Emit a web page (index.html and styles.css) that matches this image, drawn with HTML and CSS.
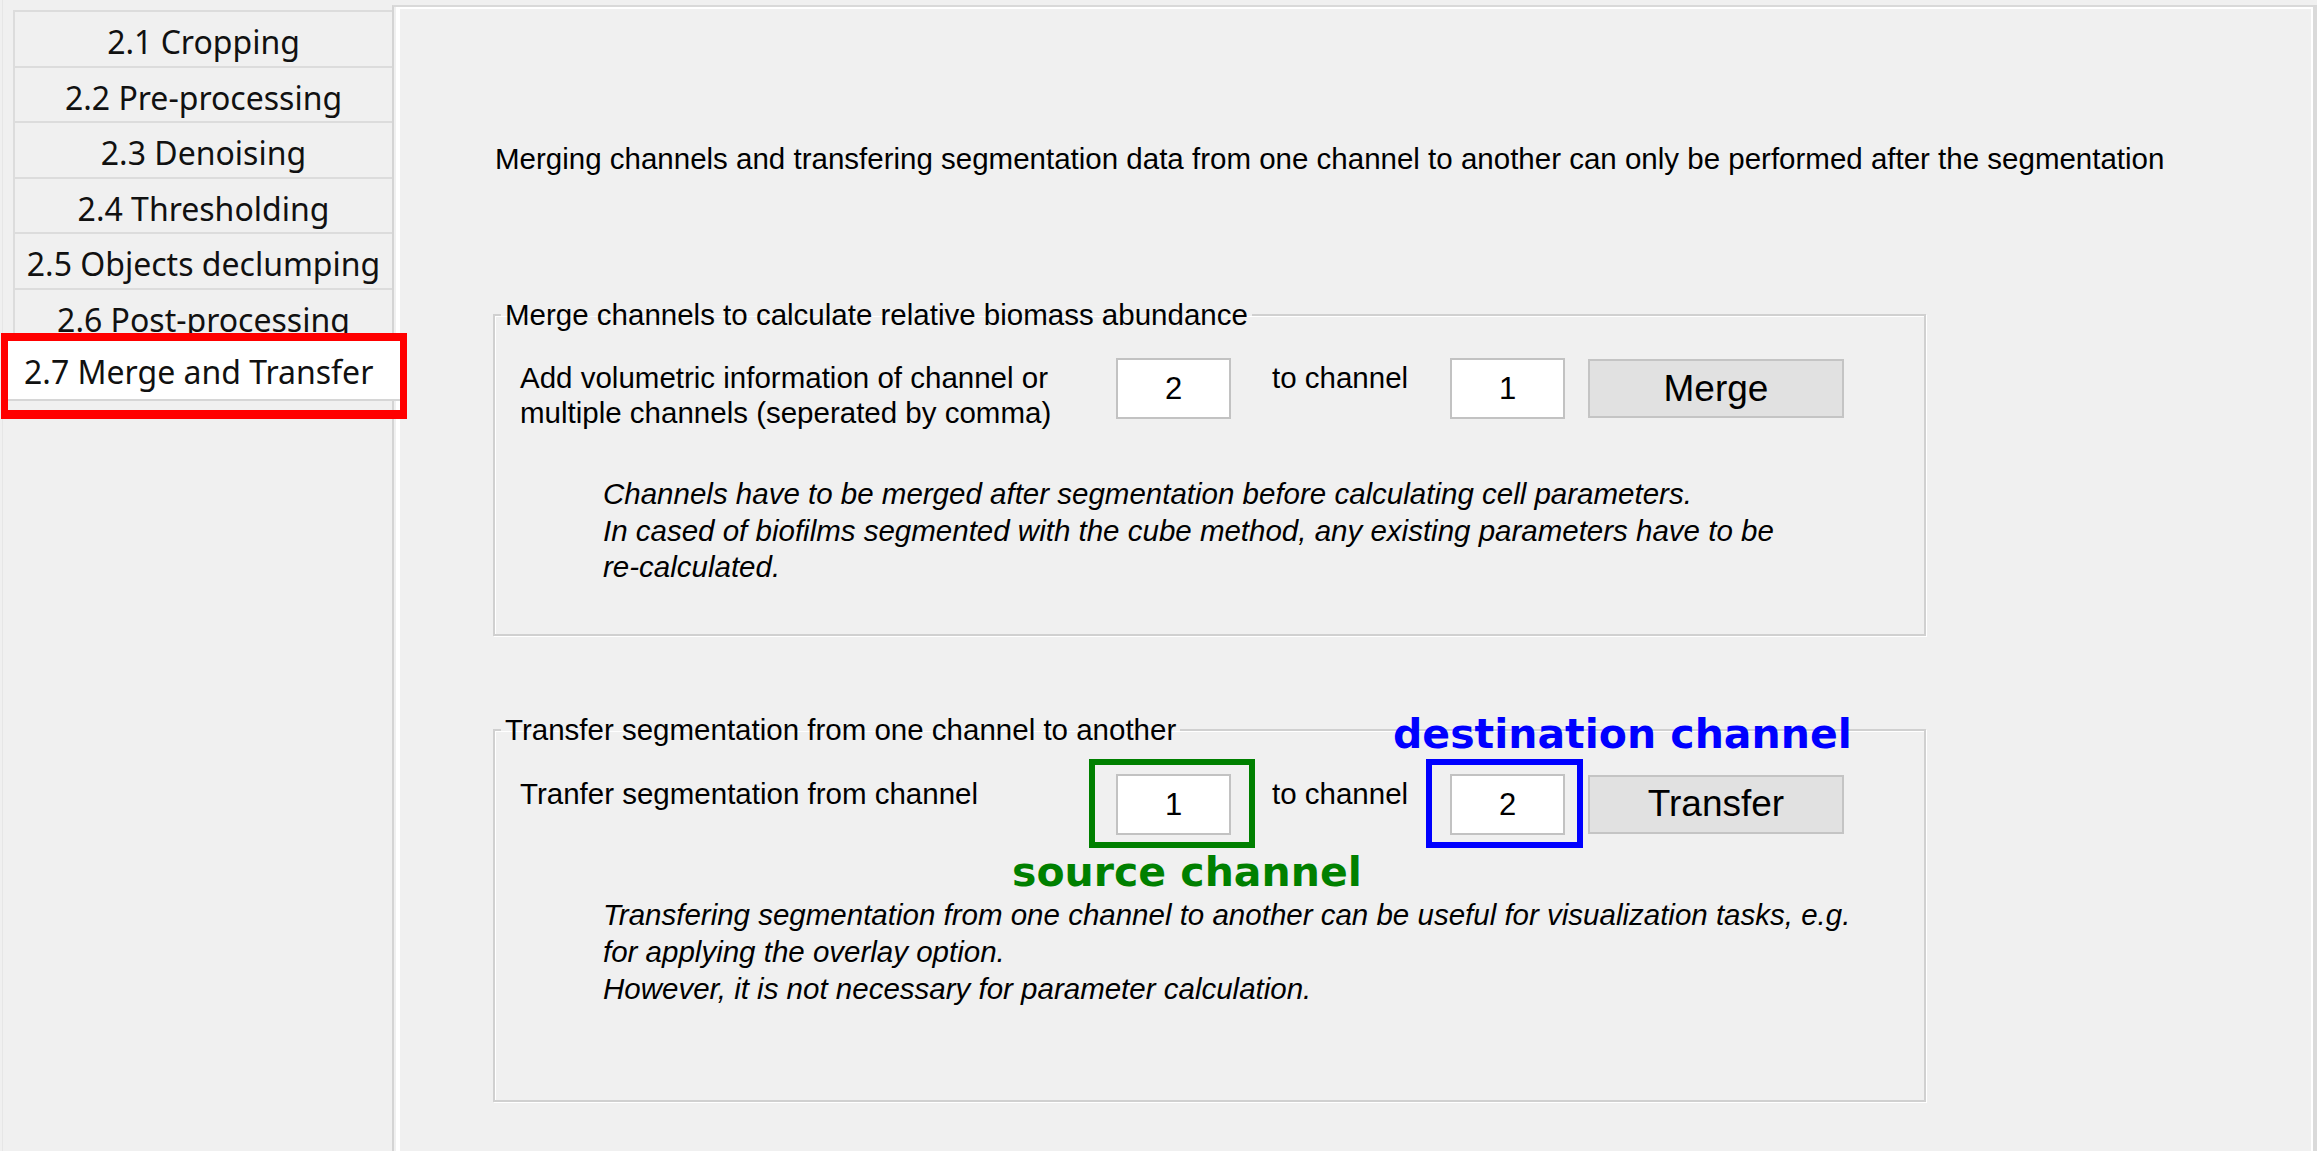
FILE: index.html
```html
<!DOCTYPE html>
<html lang="en">
<head>
<meta charset="utf-8">
<title>Merge and Transfer</title>
<link rel="stylesheet" href="styles.css">
</head>
<body>
<div class="app">
  <aside class="sidebar">
    <ul class="tabs">
      <li class="tab">2.1 Cropping</li>
      <li class="tab">2.2 Pre-processing</li>
      <li class="tab">2.3 Denoising</li>
      <li class="tab">2.4 Thresholding</li>
      <li class="tab">2.5 Objects declumping</li>
      <li class="tab">2.6 Post-processing</li>
      <li class="tab tab-selected">2.7 Merge and Transfer<span class="mark mark-red"></span></li>
    </ul>
  </aside>
  <main class="panel">
    <div class="panel-inner">
      <p class="intro">Merging channels and transfering segmentation data from one channel to another can only be performed after the segmentation</p>

      <fieldset class="group group-merge">
        <legend>Merge channels to calculate relative biomass abundance</legend>
        <div class="group-body">
          <div class="row">
            <div class="label">Add volumetric information of channel or<br>multiple channels (seperated by comma)</div>
            <div class="field"><span class="input">2</span></div>
            <div class="label-to">to channel</div>
            <div class="field"><span class="input">1</span></div>
            <button class="btn" type="button">Merge</button>
          </div>
          <p class="note">Channels have to be merged after segmentation before calculating cell parameters.<br>In cased of biofilms segmented with the cube method, any existing parameters have to be<br>re-calculated.</p>
        </div>
      </fieldset>

      <fieldset class="group group-transfer">
        <legend>Transfer segmentation from one channel to another</legend>
        <div class="group-body">
          <div class="row">
            <div class="label">Tranfer segmentation from channel</div>
            <div class="field">
              <span class="input">1</span>
              <span class="mark mark-green"></span>
              <span class="tag tag-green">source channel</span>
            </div>
            <div class="label-to">to channel</div>
            <div class="field">
              <span class="input">2</span>
              <span class="mark mark-blue"></span>
              <span class="tag tag-blue">destination channel</span>
            </div>
            <button class="btn" type="button">Transfer</button>
          </div>
          <p class="note note-transfer">Transfering segmentation from one channel to another can be useful for visualization tasks, e.g.<br>for applying the overlay option.<br>However, it is not necessary for parameter calculation.</p>
        </div>
      </fieldset>
    </div>
  </main>
</div>
</body>
</html>
```

FILE: styles.css
```css
html, body {
  margin: 0;
  padding: 0;
}

body {
  background: #f0f0f0;
  width: 2317px;
  height: 1151px;
  overflow: hidden;
  font-family: "Liberation Sans", Arial, sans-serif;
  color: #000;
}

.app {
  display: flex;
  height: 1151px;
}

/* ---------- sidebar ---------- */
.sidebar {
  flex: none;
  box-sizing: border-box;
  width: 390px;
  margin-left: 2px;
  padding: 10px 0 0 10px;
  border-left: 1px solid #e6e6e6;
}

.tabs {
  list-style: none;
  margin: 0;
  padding: 0;
  border-top: 2px solid #dcdcdc;
  border-left: 2px solid #dcdcdc;
}

.tab {
  position: relative;
  height: 47.5px;
  padding-top: 6px;
  line-height: 47.5px;
  border-bottom: 2px solid #dcdcdc;
  text-align: center;
  font-family: "Noto Sans", "Open Sans", sans-serif;
  font-size: 32px;
  color: #111;
  background: #f0f0f0;
  white-space: nowrap;
}

.tab-selected {
  background: #fff;
  margin: -4px -8px 0 -7px;
  height: 54px;
  padding-top: 4px;
  line-height: 54px;
  z-index: 2;
  text-align: left;
  padding-left: 16px;
  border-bottom: 2px solid #d6d6d6;
}

/* ---------- annotation marks ---------- */
.mark {
  position: absolute;
  box-sizing: border-box;
  pointer-events: none;
}

.mark-red {
  top: -8px;
  left: -7px;
  right: -7px;
  bottom: -20px;
  border: 7px solid #ff0000;
  border-top-width: 8px;
  border-bottom-width: 9px;
}

.mark-green {
  top: -15px;
  left: -27px;
  right: -24px;
  bottom: -13px;
  border: 6px solid #008000;
}

.mark-blue {
  top: -15px;
  left: -24px;
  right: -18px;
  bottom: -13px;
  border: 6px solid #0000ff;
}

.tag {
  position: absolute;
  font-family: "DejaVu Sans", sans-serif;
  font-weight: bold;
  font-size: 41px;
  line-height: 48px;
  white-space: nowrap;
}

.tag-green {
  color: #008000;
  left: -104px;
  top: 74px;
}

.tag-blue {
  color: #0000ff;
  left: -57px;
  top: -64px;
}

/* ---------- main panel ---------- */
.panel {
  flex: 1;
  margin-top: 5px;
  border-top: 2px solid #d9d9d9;
  border-left: 2px solid #d4d4d4;
  border-right: 4px solid #dadada;
  padding-left: 2px;
  min-width: 0;
}

.panel-inner {
  height: 100%;
  box-sizing: border-box;
  border-top: 2px solid #fff;
  border-left: 4px solid #fff;
  border-right: 2px solid #fff;
  padding: 132px 0 0 93px;
}

.intro {
  margin: 0 0 0 2px;
  font-size: 29.5px;
  line-height: 36px;
  white-space: nowrap;
}

.group {
  margin: 120px 0 0 0;
  padding: 0;
  width: 1433px;
  box-sizing: border-box;
  border: 2px solid #d0d0d0;
  box-shadow: inset 1px 1px 0 #fff, 1px 1px 0 #fff;
  min-inline-size: 0;
}

.group-transfer {
  margin-top: 76px;
}

.group legend {
  margin-left: 6px;
  padding: 0 4px;
  font-size: 29.5px;
  line-height: 36px;
  white-space: nowrap;
}

.group-body {
  padding: 25px 0 48px 25px;
}

.group-transfer .group-body {
  padding-top: 26px;
  padding-bottom: 93px;
}

.row {
  display: flex;
  align-items: flex-start;
}

.label {
  width: 596px;
  flex: none;
  margin-top: 2px;
  font-size: 29.5px;
  line-height: 35px;
  white-space: nowrap;
}

.field {
  position: relative;
  flex: none;
}

.input {
  display: block;
  box-sizing: border-box;
  width: 115px;
  height: 61px;
  background: #fff;
  border: 2px solid #c2c2c2;
  text-align: center;
  font-size: 31px;
  line-height: 57px;
}

.label-to {
  flex: none;
  width: 178px;
  margin-left: 41px;
  margin-top: 2px;
  font-size: 29.5px;
  line-height: 35px;
  white-space: nowrap;
}

.btn {
  flex: none;
  margin: 1px 0 0 23px;
  width: 256px;
  height: 59px;
  padding: 0;
  background: #e1e1e1;
  border: 2px solid #c4c4c4;
  font-family: "Liberation Sans", Arial, sans-serif;
  font-size: 37px;
  color: #000;
}

.note {
  margin: 46px 0 0 83px;
  font-size: 29.5px;
  font-style: italic;
  line-height: 36.5px;
  white-space: nowrap;
}

.note-transfer {
  margin-top: 61px;
  line-height: 37px;
}
```
